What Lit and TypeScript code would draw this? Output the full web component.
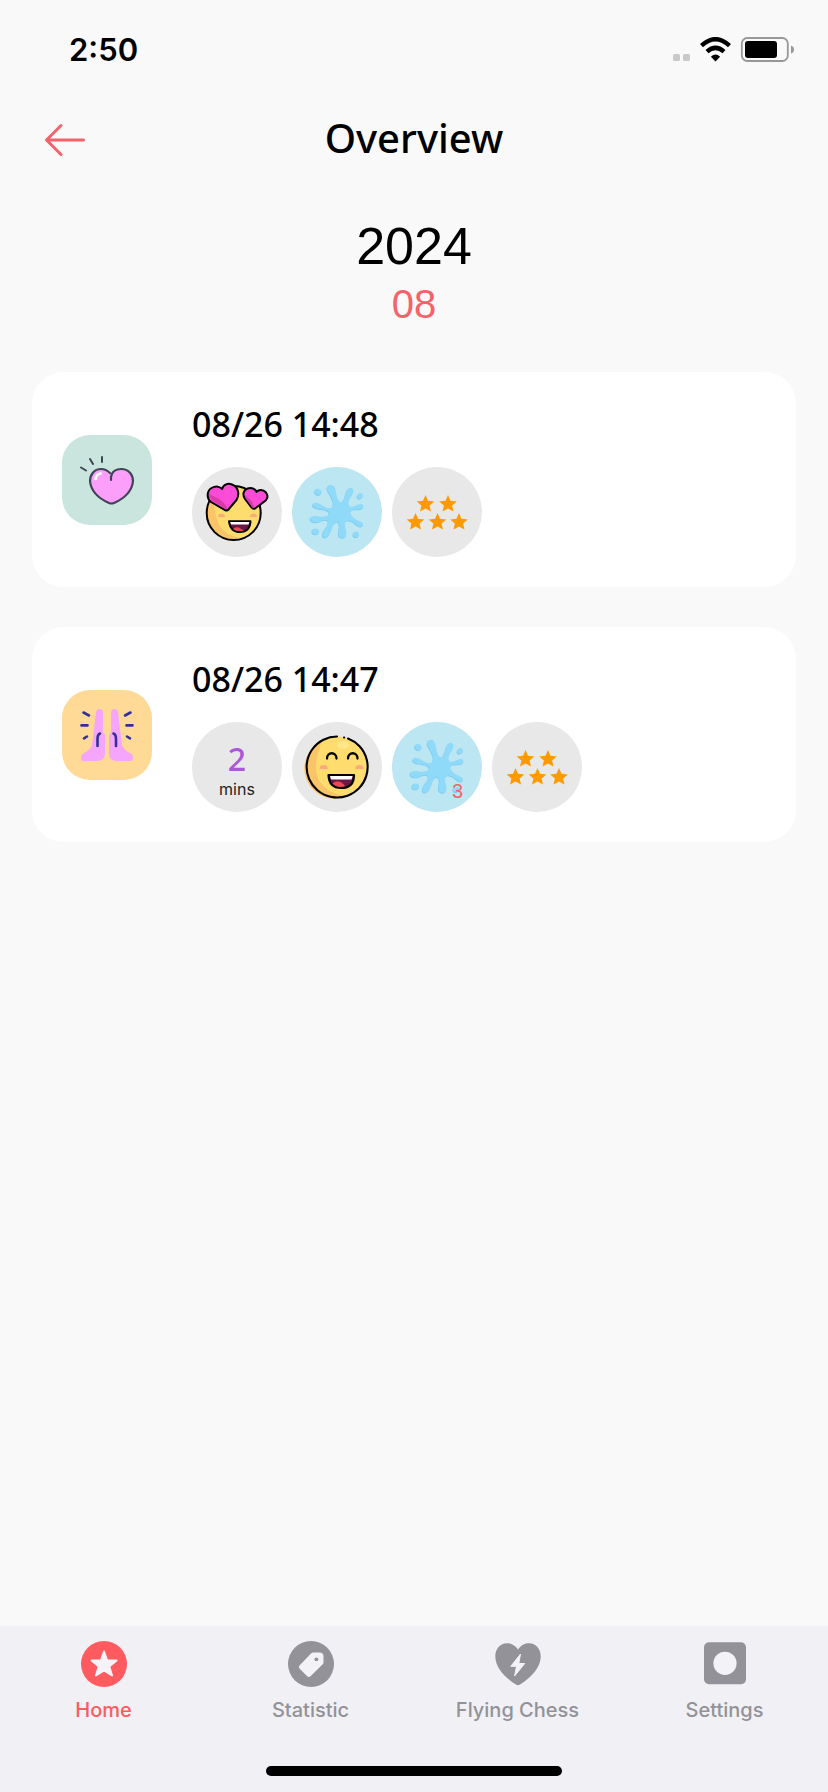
import { LitElement, html, svg, css } from "lit";
import type { TemplateResult } from "lit";
import { customElement, property } from "lit/decorators.js";
import { classMap } from "lit/directives/class-map.js";

type Badge = "love" | "laugh" | "splash" | "stars" | "minutes";

interface BadgeItem {
  kind: Badge;
  value?: number;
}

interface RecordItem {
  title: string;
  tile: "heart" | "hands";
  badges: BadgeItem[];
}

const RECORDS: RecordItem[] = [
  {
    title: "08/26 14:48",
    tile: "heart",
    badges: [{ kind: "love" }, { kind: "splash" }, { kind: "stars" }],
  },
  {
    title: "08/26 14:47",
    tile: "hands",
    badges: [
      { kind: "minutes", value: 2 },
      { kind: "laugh" },
      { kind: "splash", value: 3 },
      { kind: "stars" },
    ],
  },
];

const heartTile = svg`
  <path d="M49 45V42C50 36 55 34 59 34C67 34 71 40 71 46C70 57 61 64 52 68Q49.500 69 47 68C38 64 29 57 28 46C28 40 32 34 39 34C43 34 46 36 48 38"
    fill="#fb9ffb" stroke="#3f4556" stroke-width="2.200" stroke-linecap="round" stroke-linejoin="round"/>
  <path d="M33.500 44Q34 39.500 38.500 38.500" fill="none" stroke="#fff" stroke-width="2.800" stroke-linecap="round"/>
  <path d="M19 32.500L24 35.500M28 24L31 29M40 22V27" fill="none" stroke="#3f4556" stroke-width="2" stroke-linecap="round"/>`;

const hand = svg`
  <path d="M34 22Q34.500 19 37.500 19Q40.500 19 41 22V42.500Q43 43 43 46V63Q43 71 35 71H21.500Q19 71 19 68.500V67Q19 64.800 21 63.700Q29 59.500 30 55Z" fill="#f5a5fb"/>
  <path d="M38 43.500Q35.500 44.500 35.500 49V56M21.500 22.500L27 25.500M19.500 35.400H25.500M22 48.300L25 46.500" fill="none" stroke="#34309a" stroke-width="2.600" stroke-linecap="round"/>`;

const handsTile = svg`<g>${hand}</g><g transform="translate(90 0) scale(-1 1)">${svg`
  <path d="M34 22Q34.500 19 37.500 19Q40.500 19 41 22V42.500Q43 43 43 46V63Q43 71 35 71H21.500Q19 71 19 68.500V67Q19 64.800 21 63.700Q29 59.500 30 55Z" fill="#f5a5fb"/>
  <path d="M38.500 43.500Q36 44.500 36 49V56M21.500 22.500L27 25.500M19.500 35.400H25.500M22 48.300L25 46.500" fill="none" stroke="#34309a" stroke-width="2.600" stroke-linecap="round"/>`}</g>`;

const love = svg`
  <circle cx="41.700" cy="46" r="27" fill="#fedc6e"/>
  <path d="M22 28A27 27 0 0 0 50 71.600Q30 68 25 53Q21 40 22 28Z" fill="#fcc468"/>
  <circle cx="41.700" cy="46" r="27" fill="none" stroke="#000" stroke-width="2"/>
  <path d="M26 50Q26 46.500 29.500 46.500T33 50ZM58 50Q58 46.500 61.500 46.500T65 50Z" fill="#fbab78"/>
  <path d="M37 54.300H58.500Q58 65 48 65Q38.500 65 37 54.300Z" fill="#6b1745" stroke="#000" stroke-width="2" stroke-linejoin="round"/>
  <path d="M38.200 55H57.500L56.500 57.500H39Z" fill="#fff"/>
  <path d="M41 62Q45 58.500 50 62.500L51.500 63.800Q45 65.500 41 62Z" fill="#f0474f"/>
  <path d="M30 22C31.500 17 36 16 40 17.500C47 20 47.500 28 44.500 33L36.500 42.500Q34.500 44.500 32 42.500L19 35C14 31 15 23.500 19.500 21C24 18.500 28 19.500 30 22Z" fill="#fc4bd6" stroke="#000" stroke-width="2" stroke-linejoin="round"/>
  <path d="M17 26Q17.500 32 22 35L32.500 41.500Q34.500 42.500 35.500 41Q31 33 23 30Q18.500 28.500 17 26Z" fill="#d93ba6"/>
  <path d="M64.500 25C66.500 22.500 71 22 74 25.500C77 29.500 75 33.500 71 35.500L63 41.500Q61 42.500 59.500 40.500L53 32C50 27.500 51.500 23 55.500 21.500C60 20 63.500 22 64.500 25Z" fill="#fc4bd6" stroke="#000" stroke-width="2" stroke-linejoin="round"/>
  <path d="M52.800 27Q53 30 55 33L60 40Q61 41 62 40.500Q61 34 56.500 31Q53.500 29.500 52.800 27Z" fill="#d93ba6"/>`;

const laugh = svg`
  <circle cx="45.500" cy="45" r="30.500" fill="#fedc6e"/>
  <path d="M30 19A30 30 0 0 0 55 74Q38 73 28 60Q19 46 30 19Z" fill="#fcc468"/>
  <ellipse cx="51" cy="23" rx="6" ry="4" fill="#ffe58c"/>
  <path d="M45 14.500A30.500 30.500 0 1 0 56 16.500M52 15.500H52.200" fill="none" stroke="#000" stroke-width="2.100" stroke-linecap="round"/>
  <path d="M35 36.500C35 29.500 44.500 29.500 44.500 36.500M56 36.500C56 29.500 65.500 29.500 65.500 36.500" fill="none" stroke="#000" stroke-width="2.300" stroke-linecap="round"/>
  <path d="M27.500 47Q27.500 43 31.700 43T35.900 47ZM63.200 47Q63.200 43 67.400 43T71.600 47Z" fill="#fbab78"/>
  <path d="M36.500 53H62Q62 66 49.300 66Q37 66 36.500 53Z" fill="#6b1745" stroke="#000" stroke-width="2.200" stroke-linejoin="round"/>
  <path d="M38 54H60.600L59.500 57.500H39Z" fill="#fff"/>
  <path d="M40.500 61.500Q46 57 51.500 62L53 64.200Q45 66.500 40.500 61.500Z" fill="#f0474f"/>`;

const splashShape = (color: string) => svg`
  <g fill=${color}>
    <path d="M37 26C33 20 36 17.500 39.500 18C43 18.500 43.500 23 44.500 28Q45.500 34 49 35.500Q52 34 53.500 27C54.500 21 59 19.500 61 22C63 25 58.500 29.500 57 33Q55.500 38 58 40Q61 40 65 38C69 36 71.500 37 71.500 39.500C71.500 42.500 67 42.500 63 42.500Q57.500 43 58.500 47Q61 51.500 66 53.500C70.500 55 72 57 70.500 59C68 61.500 64.500 57.500 61 55Q57 52.500 54 54Q52 57 53.500 62C55.500 67.500 54 71 50.500 71C46.500 71 45.500 66.500 47 62Q48 56 45.500 55Q42 55 40 61C38 68.500 35 71.500 32 70.500C29 69 30.500 64.500 33 61.500Q37 57 36 54Q34 52 29 54C23 57 18.500 55 18 52.500C17.500 49 22 48.500 27 49.500Q35 50.500 37 47Q37.500 43.500 31 42.500C24 42 19.500 40 21 37C23 34 27.500 37 31.500 39Q37 42.500 40 40.500Q42 38 40.500 33Q39 29.500 37 26Z"/>
    <ellipse cx="26" cy="25" rx="3.600" ry="2.900" transform="rotate(25 26 25)"/>
    <ellipse cx="68" cy="29" rx="3" ry="2.600" transform="rotate(-35 68 29)"/>
    <ellipse cx="23.500" cy="64.500" rx="3.600" ry="3"/>
    <ellipse cx="64" cy="67.500" rx="3" ry="2.800"/>
  </g>`;

const splash = svg`
  <g transform="translate(-0.500 0.800)">${splashShape("#7ccbee")}</g>
  ${splashShape("#8fd9f9")}`;

const STAR = "M0-9L2.500-3.200L8.800-2.600L4.100 1.600L5.500 7.600L0 4.500L-5.500 7.600L-4.100 1.600L-8.800-2.600L-2.500-3.200Z";
const STAR_SPOTS = [[33.5, 37], [56, 37], [23.5, 55], [45.5, 55], [67, 55]];
const stars = svg`${STAR_SPOTS.map(
  ([x, y]) => svg`<path d=${STAR} transform=${`translate(${x} ${y})`} fill="#ff9900"/>`
)}`;

const ART = { love, laugh, splash, stars };

@customElement("record-badge")
class RecordBadge extends LitElement {
  @property() kind: Badge = "stars";
  @property({ type: Number }) value?: number;

  static styles = css`
    :host { display: block; }
    .badge {
      position: relative;
      display: flex;
      flex-direction: column;
      align-items: center;
      justify-content: center;
      width: 90px;
      height: 90px;
      border-radius: 50%;
      background: #e8e8e8;
    }
    .minutes { box-sizing: border-box; padding-top: 8px; }
    .splash { background: #bce6f1; }
    .art { display: block; width: 90px; height: 90px; }
    .number {
      font: 500 32px/36px "Noto Sans", sans-serif;
      color: #aa57d8;
    }
    .unit { font: 400 16px/24px Inter, sans-serif; color: #222; }
    .count {
      position: absolute;
      right: 19px;
      bottom: 9px;
      font: 400 20px/24px "Liberation Sans", sans-serif;
      color: #f2646a;
    }
  `;

  render() {
    if (this.kind === "minutes") {
      return html`<div class="badge minutes">
        <span class="number">${this.value}</span>
        <span class="unit">mins</span>
      </div>`;
    }
    return html`<div class=${classMap({ badge: true, splash: this.kind === "splash" })}>
      <svg class="art" viewBox="0 0 90 90" aria-hidden="true">${ART[this.kind]}</svg>
      ${this.value ? html`<span class="count">${this.value}</span>` : ""}
    </div>`;
  }
}

@customElement("record-card")
class RecordCard extends LitElement {
  @property({ attribute: false }) record!: RecordItem;

  static styles = css`
    :host { display: block; }
    .card {
      display: flex;
      align-items: center;
      gap: 40px;
      padding: 30px;
      border-radius: 32px;
      background: #fff;
    }
    .tile {
      flex: none;
      width: 90px;
      height: 90px;
      border-radius: 28px;
      background: #cae5dd;
    }
    .hands { background: #ffda96; }
    .body { display: flex; flex-direction: column; gap: 20px; }
    .title {
      margin: 0;
      font: 500 34px/45px "Noto Sans", sans-serif;
      color: #000;
    }
    .badges { display: flex; flex-wrap: wrap; gap: 10px; }
  `;

  render() {
    const { title, tile, badges } = this.record;
    return html`<article class="card">
      <svg class=${classMap({ tile: true, hands: tile === "hands" })} viewBox="0 0 90 90" aria-hidden="true">
        ${tile === "heart" ? heartTile : handsTile}
      </svg>
      <div class="body">
        <h3 class="title">${title}</h3>
        <div class="badges">
          ${badges.map((b) => html`<record-badge .kind=${b.kind} .value=${b.value}></record-badge>`)}
        </div>
      </div>
    </article>`;
  }
}

const TABS: { label: string; icon: TemplateResult<2> }[] = [
  {
    label: "Home",
    icon: svg`<circle cx="23" cy="23" r="23" fill="currentColor"/>
      <path d="M23 10.500L26 19.200L35.500 19.400L28.200 25.400L31 34.500L23 29.400L15 34.500L17.800 25.400L10.500 19.400L20 19.200Z" fill="#f5f3f7" stroke="#f5f3f7" stroke-width="2" stroke-linejoin="round"/>`,
  },
  {
    label: "Statistic",
    icon: svg`<circle cx="23" cy="23" r="23" fill="currentColor"/>
      <path d="M25.500 11.400H31.500Q35.500 11.400 35.500 15.500V21Q35.500 22.500 34.500 23.500L22.500 35.200Q20.800 36.800 19.200 35.200L11.500 27.500Q10 26 11.500 24.400L23 12.600Q24.200 11.400 25.500 11.400Z" fill="#f3f2f6"/>
      <circle cx="28.400" cy="18.300" r="1.900" fill="currentColor"/>`,
  },
  {
    label: "Flying Chess",
    icon: svg`<path d="M23 8.500C26 4 30 2.200 34 2.200C41 2.200 45.700 8 45.700 15C45.700 28 34 38 25 43.500Q23 44.800 21 43.500C12 38 0.300 28 0.300 15C0.300 8 5 2.200 12 2.200C16 2.200 20 4 23 8.500Z" fill="currentColor"/>
      <path d="M25.500 13L15.800 25.300H21.500L19.600 35L29.700 22.500H23.800Z" fill="#f3f2f6" stroke="#f3f2f6" stroke-width="1" stroke-linejoin="round"/>`,
  },
  {
    label: "Settings",
    icon: svg`<rect x="2" y="1.300" width="42" height="42" rx="5" fill="currentColor"/>
      <circle cx="23" cy="22.300" r="11.600" fill="#f3f2f6"/>`,
  },
];

@customElement("app-root")
class AppRoot extends LitElement {
  static styles = css`
    :host {
      display: flex;
      flex-direction: column;
      min-height: 100vh;
      background: #f9f9f9;
      color: #000;
      font-family: Inter, sans-serif;
    }
    .status {
      display: flex;
      align-items: center;
      justify-content: space-between;
      height: 100px;
      padding: 0 33px 0 69px;
      box-sizing: border-box;
    }
    .time { font: 600 31px/40px Inter, sans-serif; }
    .signals { display: block; width: 122px; height: 26px; }
    .header {
      display: grid;
      grid-template-columns: 1fr auto 1fr;
      align-items: center;
      height: 76px;
      padding: 0 44px;
    }
    .back {
      justify-self: start;
      padding: 0;
      border: 0;
      background: none;
      color: #f4636a;
      cursor: pointer;
    }
    .arrow { display: block; width: 42px; height: 38px; }
    .heading { margin: 0; font: 500 40px/52px "Noto Sans", sans-serif; }
    .period {
      display: flex;
      flex-direction: column;
      gap: 4px;
      margin: 40px 0 44px;
      text-align: center;
      font-family: "Liberation Sans", sans-serif;
    }
    .year { margin: 0; font-size: 52px; font-weight: 400; line-height: 60px; }
    .month { margin: 0; font-size: 40px; line-height: 48px; color: #f4636a; }
    .list {
      flex: 1;
      display: flex;
      flex-direction: column;
      gap: 40px;
      padding: 0 32px 40px;
    }
    .footer { background: #f1f0f5; }
    .tabs {
      display: grid;
      grid-template-columns: repeat(4, 1fr);
      padding: 15px 0 41px;
    }
    .tab {
      display: flex;
      flex-direction: column;
      align-items: center;
      gap: 11px;
      color: #929298;
      text-decoration: none;
      font: 500 20px/24px Inter, sans-serif;
    }
    .active { color: #ff5a5f; }
    .icon { display: block; width: 46px; height: 46px; }
    .indicator {
      width: 296px;
      height: 10px;
      margin: 0 auto;
      border-radius: 5px;
      background: #000;
    }
    .safe { padding: 3px 0 16px; }
  `;

  render() {
    return html`
      <div class="status">
        <span class="time">2:50</span>
        <svg class="signals" viewBox="0 0 122 26" aria-hidden="true">
          <rect x="0" y="17" width="7" height="7" rx="1.500" fill="#c9c9c9"/>
          <rect x="10" y="17" width="7" height="7" rx="1.500" fill="#c9c9c9"/>
          <g fill="none" stroke="#000" stroke-width="4.400">
            <path d="M28.500 8.700Q42.500-4.300 56.500 8.700"/>
            <path d="M34 14.700Q42.500 7.100 51 14.700"/>
          </g>
          <path d="M42.500 24.500L37.900 19.700Q42.500 15.500 47.100 19.700Z"/>
          <rect x="68.800" y="1" width="46" height="23" rx="5.500" fill="none" stroke="#989898" stroke-width="1.800"/>
          <rect x="72" y="4" width="32" height="17" rx="3"/>
          <path d="M118 8.500Q121 9.500 121 12.500T118 16.500Z" fill="#989898"/>
        </svg>
      </div>
      <header class="header">
        <button class="back" type="button" aria-label="Back">
          <svg class="arrow" viewBox="0 0 42 38" fill="none" stroke="currentColor" stroke-width="3" stroke-linecap="round" stroke-linejoin="round">
            <path d="M39.500 21H3M17 6.500L2.500 21L17 35.500"/>
          </svg>
        </button>
        <h1 class="heading">Overview</h1>
      </header>
      <div class="period">
        <h2 class="year">2024</h2>
        <p class="month">08</p>
      </div>
      <main class="list">
        ${RECORDS.map((r) => html`<record-card .record=${r}></record-card>`)}
      </main>
      <footer class="footer">
        <nav class="tabs">
          ${TABS.map(
            (tab, i) => html`<a class=${classMap({ tab: true, active: i === 0 })} href="#">
              <svg class="icon" viewBox="0 0 46 46" aria-hidden="true">${tab.icon}</svg>
              <span>${tab.label}</span>
            </a>`
          )}
        </nav>
        <div class="safe"><div class="indicator"></div></div>
      </footer>
    `;
  }
}
